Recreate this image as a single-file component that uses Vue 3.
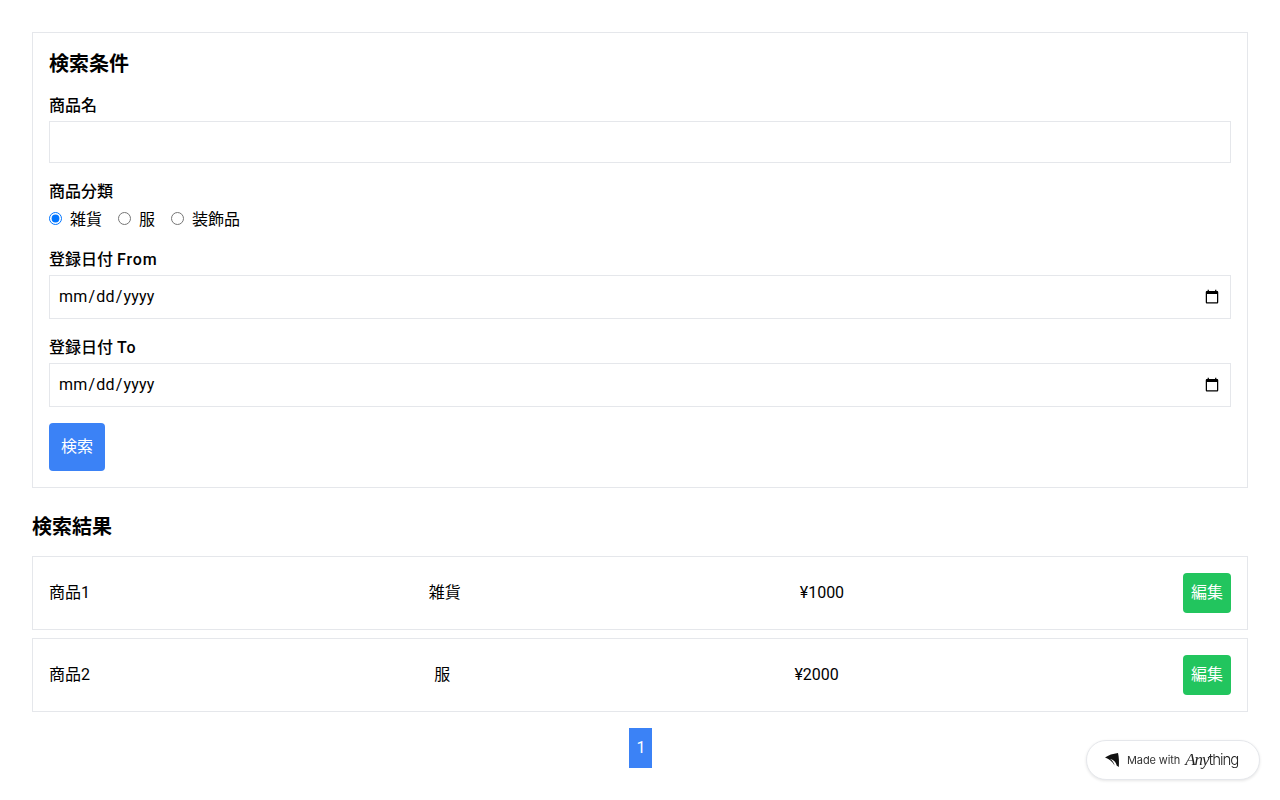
<script setup>
const categories = ['雑貨', '服', '装飾品']
const rows = [
  { name: '商品1', category: '雑貨', price: '¥1000' },
  { name: '商品2', category: '服', price: '¥2000' },
]
</script>

<template>
  <main class="page">
    <section class="card search">
      <h2 class="heading">検索条件</h2>
      <div class="field">
        <label class="label">商品名</label>
        <input class="input text" type="text" />
      </div>
      <div class="field">
        <label class="label">商品分類</label>
        <div class="radios">
          <label v-for="(c, i) in categories" :key="c" class="radio">
            <input type="radio" name="cat" :checked="i === 0" />
            <span>{{ c }}</span>
          </label>
        </div>
      </div>
      <div class="field">
        <label class="label">登録日付 <span class="latin">From</span></label>
        <input class="input" type="date" />
      </div>
      <div class="field">
        <label class="label">登録日付 <span class="latin">To</span></label>
        <input class="input" type="date" />
      </div>
      <button class="search-btn">検索</button>
    </section>

    <h2 class="heading">検索結果</h2>
    <div v-for="r in rows" :key="r.name" class="card row">
      <span>{{ r.name }}</span>
      <span>{{ r.category }}</span>
      <span>{{ r.price }}</span>
      <button class="edit">編集</button>
    </div>

    <div class="pager"><button class="page-btn">1</button></div>

    <a class="badge">
      <svg class="logo" width="16" height="16" viewBox="0 0 16 16">
        <path d="M1 5.6 C4.4 3.2 9 1.6 14 1 C15 5 15.2 10.4 14.8 15 L12.6 13.6 C12.2 10.4 9.6 7.6 5.8 6.8 C8.4 8.4 10 10.6 10.6 13.6 C8.4 9.8 5 7 1 5.6 Z" fill="#111" />
      </svg>
      <span class="made">Made with</span>
      <span class="brand"><i>Any</i>thing</span>
    </a>
  </main>
</template>

<style>
html, body { margin: 0; background: #fff; }
</style>

<style scoped>
.page {
  padding: 32px;
  font-family: Roboto, "Noto Sans CJK JP", sans-serif;
  font-size: 16px;
  line-height: 24px;
  color: #000;
}
.card { border: 1px solid #e5e7eb; box-sizing: border-box; }
.search { padding: 16px; margin-bottom: 24px; }
.heading { margin: 0 0 15px; padding-top: 1px; font-size: 20px; line-height: 28px; font-weight: 700; }
.field { margin-bottom: 16px; }
.label { display: block; margin-bottom: 3px; padding-top: 1px; font-weight: 500; }
.latin { letter-spacing: 0.9px; }
.input {
  display: block;
  width: 100%;
  box-sizing: border-box;
  height: 44px;
  padding: 8px;
  border: 1px solid #e5e7eb;
  background: #fff;
  font: inherit;
  letter-spacing: 0.2px;
  color: #000;
  outline: none;
}
.input.text { height: 42px; }
.radios { height: 24px; box-sizing: border-box; padding-top: 1px; }
.radio { margin-right: 16px; }
.radio input { width: 13px; height: 13px; margin: 0 8px 0 0; }
.search-btn {
  display: block;
  padding: 12px;
  border: 0;
  border-radius: 4px;
  background: #3b82f6;
  color: #fff;
  font: inherit;
}
.row {
  display: flex;
  justify-content: space-between;
  align-items: center;
  padding: 16px;
  margin-bottom: 8px;
}
.edit {
  padding: 8px;
  border: 0;
  border-radius: 4px;
  background: #22c55e;
  color: #fff;
  font: inherit;
}
.pager { display: flex; justify-content: center; margin-top: 16px; }
.page-btn {
  padding: 8px 6px 8px 8px;
  border: 0;
  background: #3b82f6;
  color: #fff;
  font: inherit;
}
.badge {
  position: fixed;
  right: 20px;
  bottom: 20px;
  width: 174px;
  height: 40px;
  box-sizing: border-box;
  display: flex;
  align-items: center;
  padding-left: 17px;
  border: 1px solid #e5e7eb;
  border-radius: 20px;
  background: #fff;
  box-shadow: 0 1px 3px rgba(0, 0, 0, 0.1);
  color: #222;
}
.logo { margin-right: 7px; }
.made { font-family: Inter, sans-serif; font-size: 11px; line-height: 16px; letter-spacing: -0.1px; color: #333; margin-right: 5px; }
.brand { font-family: Inter, sans-serif; font-size: 15px; line-height: 20px; font-weight: 300; letter-spacing: -1px; color: #222; }
.brand i { font-family: "Liberation Serif", serif; font-style: italic; font-size: 17px; }
</style>
